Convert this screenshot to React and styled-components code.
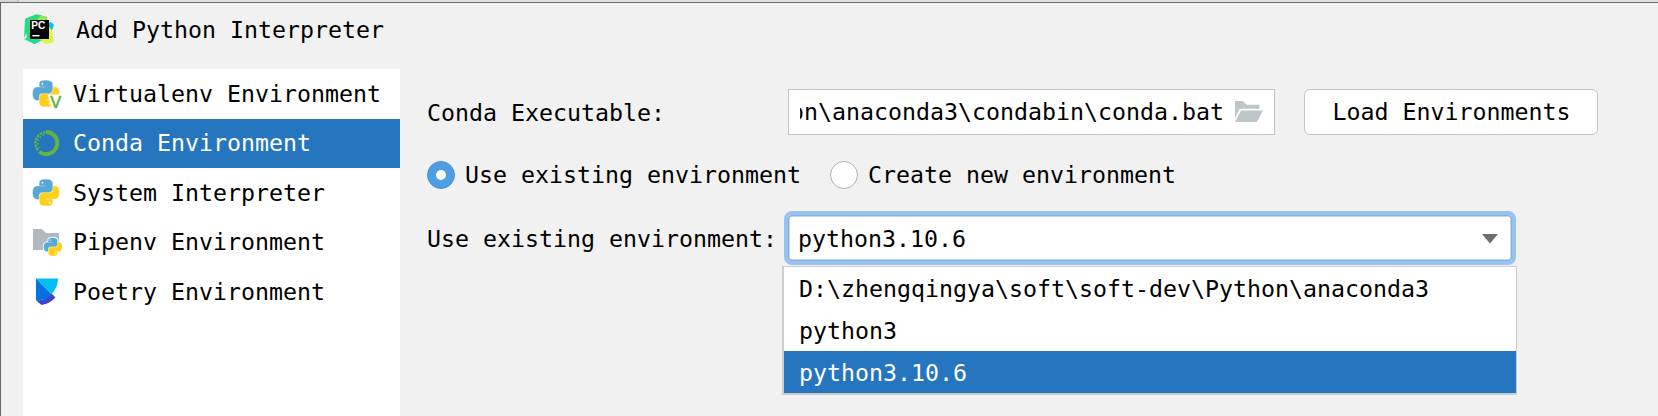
import React from "react";
import styled, { createGlobalStyle, css } from "styled-components";

const GlobalStyle = createGlobalStyle`
  * { box-sizing: border-box; }
  body { margin: 0; background: #f1f1f1; overflow: hidden; }
`;

const Backdrop = styled.div`
  width: 1658px;
  height: 416px;
  padding-top: 2px;
  background: linear-gradient(90deg, #d6d6d6 17px, #c2c2c2 17px, #c2c2c2 19px, #e1e1e1 19px);
  overflow: hidden;
`;

const Dialog = styled.div`
  height: 414px;
  border-top: 1px solid #6b6b6b;
  border-left: 1px solid #6b6b6b;
  background: #f1f1f1;
  color: #000;
  font: 23.25px/28px "DejaVu Sans Mono", monospace;
  white-space: pre;
`;

const TitleBar = styled.header`
  display: flex;
  align-items: center;
  gap: 21px;
  height: 66px;
  padding: 0 0 13px 23px;
`;

const Body = styled.div`
  display: flex;
  height: 347px;
  padding-left: 22px;
`;

const Sidebar = styled.nav`
  width: 377px;
  height: 100%;
  padding-top: 0.5px;
  background: #fff;
`;

const SidebarItem = styled.div`
  display: flex;
  align-items: center;
  gap: 11px;
  height: 49.4px;
  padding-left: 9px;
  ${(p) => p.$selected && css`
    padding-bottom: 1px;
    background: #2675bf;
    color: #fff;
  `}
`;

const IconSlot = styled.span`
  display: flex;
  flex: none;
  width: 30px;
  height: 30px;
`;

const Form = styled.main`
  display: flex;
  flex-direction: column;
  padding: 19px 0 0 27px;
`;

const Row = styled.div`
  display: flex;
  align-items: center;
  height: ${(p) => p.$height}px;
  margin-bottom: ${(p) => p.$gap || 0}px;
`;

const Label = styled.label`
  width: ${(p) => p.$width}px;
  padding-top: 2px;
`;

const PathField = styled.div`
  display: flex;
  align-items: center;
  gap: 11px;
  width: 487px;
  height: 46px;
  padding-left: 11px;
  border: 1px solid #c4c4c4;
  background: #fff;
`;

const PathText = styled.span`
  display: flex;
  justify-content: flex-end;
  width: 424px;
  padding-top: 1px;
  overflow: hidden;
`;

const Button = styled.button`
  width: 294px;
  height: 46px;
  margin-left: 29px;
  padding: 1px 0 0 1px;
  border: 1px solid #c4c4c4;
  border-radius: 6px;
  background: #fff;
  color: inherit;
  font: inherit;
`;

const Radio = styled.span`
  display: grid;
  place-items: center;
  flex: none;
  width: 28px;
  height: 28px;
  margin-right: 10px;
  border: 1.5px solid ${(p) => (p.$checked ? "#4a92d9" : "#afafaf")};
  border-radius: 50%;
  background: ${(p) => (p.$checked ? "#4f9ee3" : "#fff")};
  &::after {
    content: "";
    width: 10px;
    height: 10px;
    border-radius: 50%;
    background: #fff;
  }
`;

const RadioOption = styled.div`
  display: flex;
  align-items: center;
  margin-right: 29px;
`;

const ComboAnchor = styled.div`
  position: relative;
  width: 732px;
  height: 54px;
`;

const Combo = styled.div`
  display: flex;
  align-items: center;
  justify-content: space-between;
  height: 54px;
  padding: 1px 14px 0 10px;
  border: 4px solid #97c3f3;
  border-radius: 8px;
  background: #fff;
  box-shadow: inset 0 0 0 1.5px #87afdc;
`;

const Menu = styled.div`
  position: absolute;
  top: 55px;
  left: -2px;
  width: 735px;
  border: solid #cdcdcd;
  border-width: 1px 1px 2px 2px;
  background: #fff;
`;

const MenuItem = styled.div`
  display: flex;
  align-items: center;
  height: 42px;
  padding: 1px 0 0 15px;
  ${(p) => p.$selected && css`background: #2675bf; color: #fff;`}
`;

const SNAKE =
  "M14.25.18l.9.2.73.26.59.3.45.32.34.34.25.34.16.33.1.3.04.26.02.2-.01.13V8.5l-.05.63-.13.55-.21.46-.26.38-.3.31-.33.25-.35.19-.35.14-.33.1-.3.07-.26.04-.21.02H8.77l-.69.05-.59.14-.5.22-.41.27-.33.32-.27.35-.2.36-.15.37-.1.35-.07.32-.04.27-.02.21v3.06H3.17l-.21-.03-.28-.07-.32-.12-.35-.18-.36-.26-.36-.36-.35-.46-.32-.59-.28-.73-.21-.88-.14-1.05-.05-1.23.06-1.22.16-1.04.24-.87.32-.71.36-.57.4-.44.42-.33.42-.24.4-.16.36-.1.32-.05.24-.01h.16l.06.01h8.16v-.83H6.18l-.01-2.75-.02-.37.05-.34.11-.31.17-.28.25-.26.31-.23.38-.2.44-.18.51-.15.58-.12.64-.1.71-.06.77-.04.84-.02 1.27.05zm-6.3 1.98l-.23.33-.08.41.08.41.23.34.33.22.41.09.41-.09.33-.22.23-.34.08-.41-.08-.41-.23-.33-.33-.22-.41-.09-.41.09z";

const Snakes = ({ transform, halo }) => (
  <g transform={transform}>
    {halo && (
      <g fill="#fff" stroke="#fff" strokeWidth="3">
        <path d={SNAKE} />
        <path d={SNAKE} transform="rotate(180 12 12)" />
      </g>
    )}
    <g strokeWidth=".5">
      <path d={SNAKE} fill="#56a8d6" stroke="#56a8d6" />
      <path d={SNAKE} fill="#ffcf1b" stroke="#ffcf1b" transform="rotate(180 12 12)" />
    </g>
  </g>
);

const Svg = ({ children }) => (
  <svg width="30" height="30" viewBox="0 0 30 30" overflow="visible">{children}</svg>
);

const PythonIcon = () => (
  <Svg><Snakes transform="translate(1 1.6) scale(1.083)" /></Svg>
);

const VirtualenvIcon = () => (
  <Svg>
    <Snakes transform="translate(1 1.6) scale(1.083)" />
    <path d="M15.5 15.5H30V30H20.5Z" fill="#fff" />
    <text x="23.7" y="29.2" textAnchor="middle" fontFamily="Liberation Sans" fontSize="16.5" fill="#5fad3f" stroke="#5fad3f" strokeWidth=".5">V</text>
  </Svg>
);

const CondaIcon = () => (
  <Svg>
    <g fill="none" stroke="#62b543">
      <path d="M14 3.9A11.1 11.1 0 1 1 7.2 23.7" strokeWidth="4" />
      <path d="M13.5 4.2A11 11 0 0 0 6.2 22.5" strokeWidth="2.4" strokeDasharray="2.6 .9" />
      <path d="M12 7A8.8 8.8 0 0 0 7 20" strokeWidth="1.6" strokeDasharray="1.6 2" />
    </g>
  </Svg>
);

const PipenvIcon = () => (
  <Svg>
    <path d="M1 2H10L14 6H27V23H1Z" fill="#afb9bf" />
    <Snakes transform="translate(12 11) scale(.74)" halo />
  </Svg>
);

const PoetryIcon = () => (
  <Svg>
    <path d="M4 23.5A22 22 0 0 0 19.5 16.5L23.5 20.4A24 24 0 0 1 9.5 28Z" fill="#3b46cf" />
    <path d="M4 1.5L19.5 17A22 22 0 0 1 4 23.5Z" fill="#0073df" />
    <path d="M4 1.5H26A22 22 0 0 1 19.5 17Z" fill="#00bdf2" />
  </Svg>
);

const PyCharmIcon = () => (
  <svg width="31" height="31" viewBox="0 0 31 31">
    <path d="M1 5L12 0.5L23 3L18 26L10 30L3 26Z" fill="#21d789" />
    <path d="M22 10L27 8L30 11L27 19Z" fill="#07c3f2" />
    <path d="M12 .5L17 1L23 5L7 10L0 24L1 5Z" fill="#24dc83" />
    <path d="M17 1L23 4L25 9L12 7Z" fill="#9be64c" />
    <path d="M25 13L28 16L30 28L22 30L17 27L10 28L22 20Z" fill="#e6f03e" />
    <path d="M0 25L6 23L18 26L11 30Z" fill="#1fdc8f" />
    <path d="M6 6H25V25H6Z" fill="#050505" />
    <text x="7.3" y="15" textLength="14" lengthAdjust="spacingAndGlyphs" fontFamily="Liberation Sans" fontWeight="bold" fontSize="10" fill="#fff">PC</text>
    <path d="M8.3 21H15.5V22.4H8.3Z" fill="#fff" />
  </svg>
);

const FolderIcon = () => (
  <svg width="28" height="21" viewBox="0 0 28 21">
    <path d="M0 0H8L11.5 3.7H24.5V7.8H4.5L0 17Z" fill="#bec5c9" />
    <path d="M6 9.5H28L22 21H0Z" fill="#bec5c9" />
  </svg>
);

const ENVIRONMENTS = [
  ["Virtualenv Environment", VirtualenvIcon],
  ["Conda Environment", CondaIcon],
  ["System Interpreter", PythonIcon],
  ["Pipenv Environment", PipenvIcon],
  ["Poetry Environment", PoetryIcon],
];

const OPTIONS = ["D:\\zhengqingya\\soft\\soft-dev\\Python\\anaconda3", "python3", "python3.10.6"];

export default function App() {
  return (
    <>
      <GlobalStyle />
      <Backdrop>
        <Dialog>
          <TitleBar><PyCharmIcon />Add Python Interpreter</TitleBar>
          <Body>
            <Sidebar>
              {ENVIRONMENTS.map(([name, Icon]) => (
                <SidebarItem key={name} $selected={name === "Conda Environment"}>
                  <IconSlot><Icon /></IconSlot>{name}
                </SidebarItem>
              ))}
            </Sidebar>
            <Form>
              <Row $height={47} $gap={25}>
                <Label $width={361}>Conda Executable:</Label>
                <PathField>
                  <PathText>on\anaconda3\condabin\conda.bat</PathText>
                  <FolderIcon />
                </PathField>
                <Button>Load Environments</Button>
              </Row>
              <Row $height={29} $gap={22}>
                <RadioOption><Radio $checked />Use existing environment</RadioOption>
                <RadioOption><Radio />Create new environment</RadioOption>
              </Row>
              <Row $height={54}>
                <Label $width={357}>Use existing environment:</Label>
                <ComboAnchor>
                  <Combo>
                    python3.10.6
                    <svg width="16" height="10" viewBox="0 0 16 10"><path d="M0 0H16L8 9.5Z" fill="#6e6e6e" /></svg>
                  </Combo>
                  <Menu>
                    {OPTIONS.map((o) => <MenuItem key={o} $selected={o === "python3.10.6"}>{o}</MenuItem>)}
                  </Menu>
                </ComboAnchor>
              </Row>
            </Form>
          </Body>
        </Dialog>
      </Backdrop>
    </>
  );
}
